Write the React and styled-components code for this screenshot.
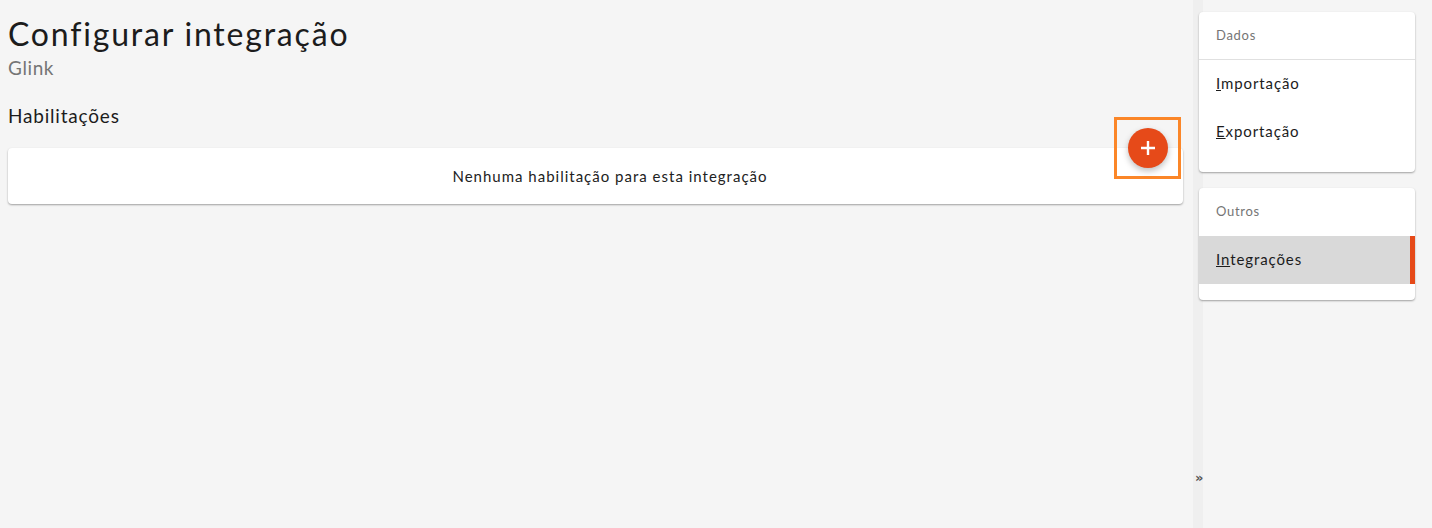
import React from 'react';
import styled, { createGlobalStyle } from 'styled-components';

const GlobalStyle = createGlobalStyle`
  html, body {
    margin: 0;
    padding: 0;
    background: #f5f5f5;
    font-family: Lato, "Open Sans", sans-serif;
    color: #1f1f1f;
  }
`;

const menus = [
  {
    title: 'Dados',
    divided: true,
    items: [
      { label: 'Importação', key: 'I', rest: 'mportação' },
      { label: 'Exportação', key: 'E', rest: 'xportação' },
    ],
  },
  {
    title: 'Outros',
    items: [{ label: 'Integrações', key: 'I', mid: 'n', rest: 'tegrações', active: true }],
  },
];

function App() {
  return (
    <>
      <GlobalStyle />
      <Page>
        <Main>
          <Title>Configurar integração</Title>
          <Subtitle>Glink</Subtitle>
          <SectionTitle>Habilitações</SectionTitle>
          <EmptyCard>
            Nenhuma habilitação para esta integração
            <FabHighlight>
              <Fab aria-label="Adicionar">
                <svg width="18" height="18" viewBox="0 0 18 18">
                  <path d="M9 2v14M2 9h14" stroke="#fff" strokeWidth="2.4" />
                </svg>
              </Fab>
            </FabHighlight>
          </EmptyCard>
        </Main>
        <Sidebar>
          <Toggle>»</Toggle>
          {menus.map(menu => (
            <MenuCard key={menu.title}>
              <MenuHeader $divided={menu.divided}>{menu.title}</MenuHeader>
              {menu.items.map(item => (
                <MenuItem key={item.label} $active={item.active}>
                  <u>{item.key}</u>
                  {item.mid && <u>{item.mid}</u>}
                  {item.rest}
                </MenuItem>
              ))}
            </MenuCard>
          ))}
        </Sidebar>
      </Page>
    </>
  );
}

export default App;

const Page = styled.div`
  display: flex;
  width: 1432px;
  height: 528px;
  overflow: hidden;
`;

const Main = styled.div`
  flex: 1;
  padding: 14px 10px 0 8px;
  display: flex;
  flex-direction: column;
`;

const Title = styled.h1`
  margin: 0;
  font-size: 32px;
  font-weight: 400;
  line-height: 40px;
  letter-spacing: 1.8px;
  color: #1c1c1c;
`;

const Subtitle = styled.div`
  margin-top: 2px;
  font-size: 19px;
  line-height: 24px;
  letter-spacing: 0.6px;
  color: #757575;
`;

const SectionTitle = styled.h2`
  margin: 24px 0 0;
  font-size: 19px;
  font-weight: 400;
  line-height: 24px;
  letter-spacing: 0.8px;
  color: #1c1c1c;
`;

const EmptyCard = styled.div`
  position: relative;
  margin-top: 20px;
  height: 56px;
  padding-left: 29px;
  background: #fff;
  border-radius: 4px;
  box-shadow: 0 1px 2px rgba(0, 0, 0, 0.35);
  display: flex;
  align-items: center;
  justify-content: center;
  font-size: 15px;
  letter-spacing: 1px;
  color: #222;
`;

const FabHighlight = styled.div`
  position: absolute;
  right: 2px;
  top: -31px;
  width: 61px;
  height: 56px;
  border: 3px solid #fb8628;
  display: flex;
  align-items: center;
  justify-content: center;
`;

const Fab = styled.button`
  width: 40px;
  height: 40px;
  border: none;
  border-radius: 50%;
  background: #e64a19;
  box-shadow: 0 3px 6px rgba(0, 0, 0, 0.25);
  display: flex;
  align-items: center;
  justify-content: center;
  padding: 0;
  cursor: pointer;
`;

const Sidebar = styled.aside`
  position: relative;
  width: 239px;
  padding: 12px 17px 0 6px;
  box-sizing: border-box;
  display: flex;
  flex-direction: column;
  gap: 16px;

  &::before {
    content: '';
    position: absolute;
    left: 0;
    top: 0;
    bottom: 0;
    width: 10px;
    background: #efefef;
  }
`;

const Toggle = styled.span`
  position: absolute;
  left: 2px;
  top: 470px;
  font-family: "DejaVu Sans", sans-serif;
  font-size: 13px;
  font-weight: 700;
  color: #555;
`;

const MenuCard = styled.div`
  position: relative;
  background: #fff;
  border-radius: 4px;
  box-shadow: 0 1px 2px rgba(0, 0, 0, 0.35);
  padding-bottom: 16px;
`;

const MenuHeader = styled.div`
  box-sizing: border-box;
  height: 48px;
  line-height: 47px;
  padding-left: 17px;
  font-size: 13px;
  letter-spacing: 0.7px;
  color: #757575;
  border-bottom: 1px solid ${({ $divided }) => ($divided ? '#e0e0e0' : 'transparent')};
`;

const MenuItem = styled.div`
  height: 48px;
  line-height: 47px;
  padding-left: 17px;
  font-size: 15px;
  letter-spacing: 0.9px;
  color: #1c1c1c;
  background: ${({ $active }) => ($active ? '#d9d9d9' : 'transparent')};
  border-right: 5px solid ${({ $active }) => ($active ? '#e64a19' : 'transparent')};
`;
